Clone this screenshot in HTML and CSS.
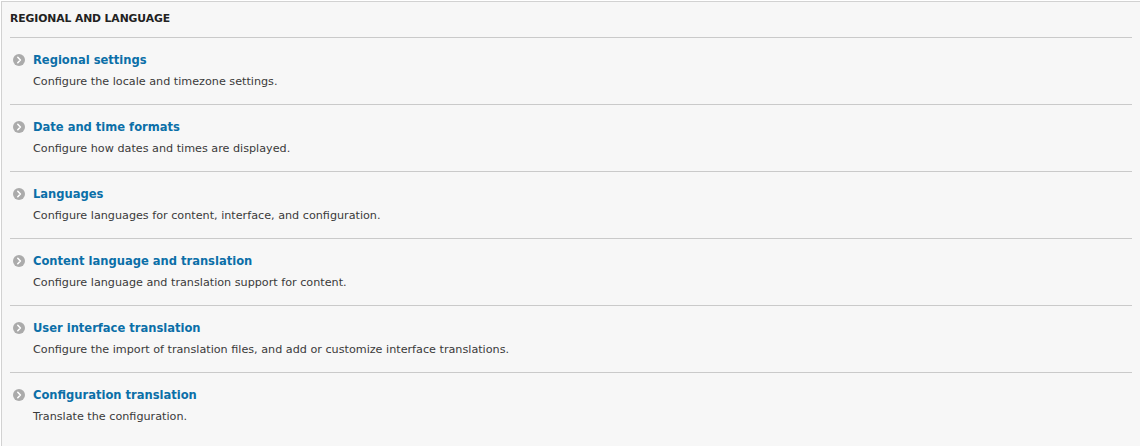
FILE: index.html
```html
<!DOCTYPE html>
<html lang="en">
<head>
<meta charset="utf-8">
<title>Regional and language</title>
<link rel="stylesheet" href="styles.css">
</head>
<body>
<div class="panel">
  <div class="section">
    <h2 class="section-title">Regional and language</h2>
    <dl class="admin-list">
      <div class="item">
        <dt><svg class="icon" viewBox="0 0 12 12" aria-hidden="true"><circle cx="6" cy="6" r="6"/><path d="M4.8 3.3 7.4 6 4.8 8.7"/></svg><a href="#">Regional settings</a></dt>
        <dd>Configure the locale and timezone settings.</dd>
      </div>
      <div class="item">
        <dt><svg class="icon" viewBox="0 0 12 12" aria-hidden="true"><circle cx="6" cy="6" r="6"/><path d="M4.8 3.3 7.4 6 4.8 8.7"/></svg><a href="#">Date and time formats</a></dt>
        <dd>Configure how dates and times are displayed.</dd>
      </div>
      <div class="item">
        <dt><svg class="icon" viewBox="0 0 12 12" aria-hidden="true"><circle cx="6" cy="6" r="6"/><path d="M4.8 3.3 7.4 6 4.8 8.7"/></svg><a href="#">Languages</a></dt>
        <dd>Configure languages for content, interface, and configuration.</dd>
      </div>
      <div class="item">
        <dt><svg class="icon" viewBox="0 0 12 12" aria-hidden="true"><circle cx="6" cy="6" r="6"/><path d="M4.8 3.3 7.4 6 4.8 8.7"/></svg><a href="#">Content language and translation</a></dt>
        <dd>Configure language and translation support for content.</dd>
      </div>
      <div class="item">
        <dt><svg class="icon" viewBox="0 0 12 12" aria-hidden="true"><circle cx="6" cy="6" r="6"/><path d="M4.8 3.3 7.4 6 4.8 8.7"/></svg><a href="#">User interface translation</a></dt>
        <dd>Configure the import of translation files, and add or customize interface translations.</dd>
      </div>
      <div class="item">
        <dt><svg class="icon" viewBox="0 0 12 12" aria-hidden="true"><circle cx="6" cy="6" r="6"/><path d="M4.8 3.3 7.4 6 4.8 8.7"/></svg><a href="#">Configuration translation</a></dt>
        <dd>Translate the configuration.</dd>
      </div>
    </dl>
  </div>
</div>
</body>
</html>
```

FILE: styles.css
```css
html, body {
  margin: 0;
  padding: 0;
  background: #ffffff;
  height: 100%;
}

body {
  padding: 1px 0 0 1px;
  box-sizing: border-box;
  font-family: "DejaVu Sans", Verdana, sans-serif;
  color: #333;
}

.panel {
  background: #f7f7f7;
  border-top: 1px solid #d2d2d2;
  border-left: 1px solid #d2d2d2;
  height: 100%;
  box-sizing: border-box;
}

.section {
  margin: 0 8px;
}

.section-title {
  margin: 0;
  height: 35px;
  line-height: 34px;
  padding-left: 0;
  font-size: 10.8px;
  font-weight: bold;
  text-transform: uppercase;
  letter-spacing: -0.1px;
  color: #222;
  border-bottom: 1px solid #cacaca;
}

.admin-list {
  margin: 0;
  padding: 0;
}

.item {
  padding: 13px 0 14px 23px;
  border-bottom: 1px solid #cacaca;
}

.item:last-child {
  border-bottom: none;
}

.item dt {
  position: relative;
  margin: 0;
  height: 18px;
  line-height: 18px;
  font-family: "DejaVu Sans Condensed", "DejaVu Sans", sans-serif;
  font-weight: bold;
  font-size: 12.8px;
}

.item dt a {
  color: #0b6fa8;
  text-decoration: none;
}

.icon {
  position: absolute;
  left: -20px;
  top: 3px;
  width: 12px;
  height: 12px;
}

.icon circle {
  fill: #ababab;
}

.icon path {
  fill: none;
  stroke: #ffffff;
  stroke-width: 1.6;
  stroke-linecap: round;
  stroke-linejoin: round;
}

.item dd {
  margin: 5px 0 0 0;
  height: 16px;
  line-height: 16px;
  font-size: 11.2px;
  color: #3a3a3a;
}
```
